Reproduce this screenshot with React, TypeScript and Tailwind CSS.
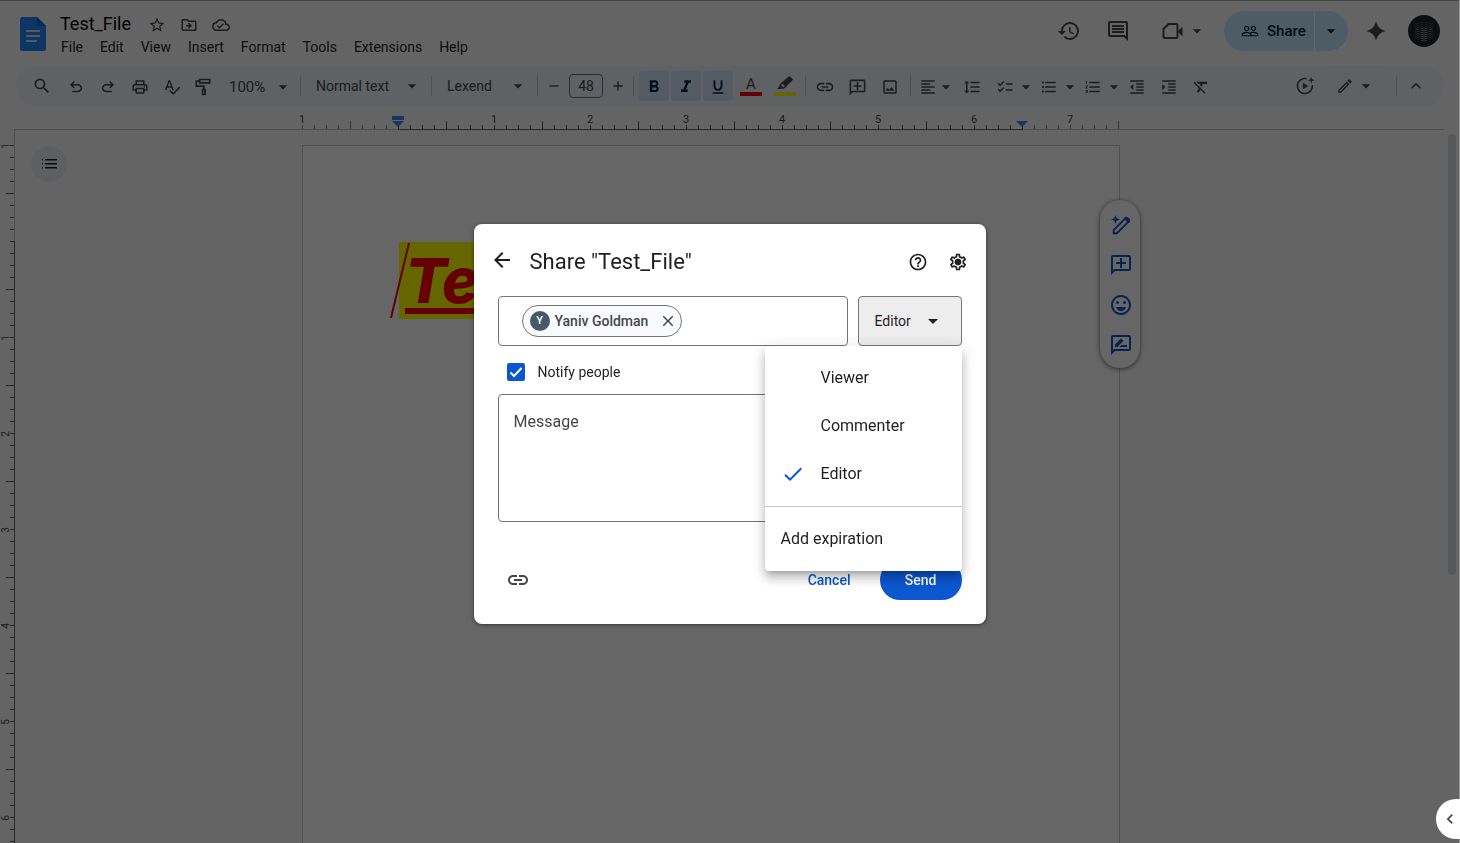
import React from "react";
import {
  MdHistory,
  MdOutlineComment,
  MdStarBorder,
  MdOutlineDriveFileMove,
  MdOutlineCloudDone,
  MdSearch,
  MdOutlinePrint,
  MdSpellcheck,
  MdArrowDropDown,
  MdRemove,
  MdAdd,
  MdFormatBold,
  MdFormatItalic,
  MdFormatUnderlined,
  MdLink,
  MdOutlineAddComment,
  MdOutlineImage,
  MdFormatAlignLeft,
  MdFormatLineSpacing,
  MdChecklist,
  MdFormatListBulleted,
  MdFormatListNumbered,
  MdFormatIndentDecrease,
  MdFormatIndentIncrease,
  MdFormatClear,
  MdOutlineEdit,
  MdKeyboardArrowUp,
  MdKeyboardArrowLeft,
  MdPeopleOutline,
  MdArrowBack,
  MdHelpOutline,
  MdOutlineSettings,
  MdClose,
  MdCheck,
  MdOutlineEmojiEmotions,
} from "react-icons/md";

type Kids = { children?: React.ReactNode };

function Symbol({ d, size = 18 }: { d: string; size?: number }) {
  return (
    <svg width={size} height={size} viewBox="0 -960 960 960" fill="currentColor" aria-hidden="true">
      <path d={d} />
    </svg>
  );
}

const UNDO =
  "M280-200v-80h284q63 0 109.500-40T720-420q0-60-46.500-100T564-560H312l104 104-56 56-200-200 200-200 56 56-104 104h252q97 0 169 63t72 157q0 94-72 157t-169 63H280Z";
const REDO =
  "M396-200q-97 0-169-63t-72-157q0-94 72-157t169-63h252L544-744l56-56 200 200-200 200-56-56 104-104H396q-63 0-109.500 40T240-420q0 60 46.500 100T396-280h284v80H396Z";

function PaintRoller() {
  return (
    <svg width="20" height="20" viewBox="0 0 24 24" fill="none" stroke="currentColor" strokeWidth="2" aria-hidden="true">
      <path d="M8 3h12v4H8zM8 5H4v6h9v4" />
      <path d="M11.500 15h3v6h-3z" />
    </svg>
  );
}

function Highlighter() {
  return (
    <svg width="16" height="14" viewBox="0 0 16 14" aria-hidden="true">
      <path d="M10.500 1.500 12.500 0 16 3.500 14.500 5.500 9.500 10 5.500 6z" fill="currentColor" />
      <path d="M5.500 6.500l3.500 3.500-2.500 2-3.500-2.500z" fill="none" stroke="currentColor" strokeWidth="1.500" />
      <path d="M0 13l2.500-3 3 2.500-.5.500z" fill="currentColor" />
    </svg>
  );
}

function VideoCam() {
  return (
    <svg width="24" height="24" viewBox="0 0 24 24" fill="none" aria-hidden="true">
      <path d="M7.500 5H15a1.500 1.500 0 0 1 1.500 1.500v11A1.500 1.500 0 0 1 15 19H4a1.500 1.500 0 0 1-1.500-1.500V10z" stroke="currentColor" strokeWidth="2" />
      <path d="M16.500 12.500l5-5v10z" fill="currentColor" />
    </svg>
  );
}

function Motion() {
  return (
    <svg width="20" height="20" viewBox="0 0 24 24" fill="none" aria-hidden="true">
      <path d="M14 3.300A9 9 0 1 0 20.800 11" stroke="currentColor" strokeWidth="2" />
      <path d="M9.500 8v8l6.500-4z" fill="currentColor" />
      <path d="M19.500 1l1 3 3 1-3 1-1 3-1-3-3-1 3-1z" fill="currentColor" />
    </svg>
  );
}

function Spark() {
  return (
    <svg width="20" height="20" viewBox="0 0 20 20" fill="currentColor" aria-hidden="true">
      <path d="M10 0c1 5.500 4.500 9 10 10-5.500 1-9 4.500-10 10-1-5.500-4.500-9-10-10 5.500-1 9-4.500 10-10z" />
    </svg>
  );
}

function DocsLogo() {
  return (
    <svg width="26" height="34" viewBox="0 0 26 34" aria-hidden="true">
      <path d="M2.500 0H17l9 9v22.500a2.500 2.500 0 0 1-2.500 2.500h-21A2.500 2.500 0 0 1 0 31.500v-29A2.500 2.500 0 0 1 2.500 0z" fill="#2684fc" />
      <path d="M17 0l9 9h-9z" fill="#0066da" />
      <path d="M6 14h14M6 19h14M6 24h11" stroke="#fff" strokeWidth="1.600" />
    </svg>
  );
}

function Avatar() {
  const dots: React.ReactNode[] = [];
  for (let row = 0; row < 11; row++) {
    for (let col = 0; col < 9; col++) {
      const off = Math.abs(col - 4);
      const x = 8 + col * 2;
      const y = 5 + row * 2 + (row < 4 ? off * 0.5 : -off * 0.5 + 1);
      const inside = y < 27 - off * 1.2 && y > 6 + off * 0.7 && !(row === 4 && off > 1);
      const bright = row >= 4 && off < 2;
      if (inside) dots.push(<circle key={row + "-" + col} cx={x} cy={y} r={0.6} fill={bright ? "#ffffff" : row < 4 ? "#6b6b6b" : "#a0a0a0"} />);
    }
  }
  return (
    <svg width="32" height="32" viewBox="0 0 32 32" role="img" aria-label="Account">
      <circle cx="16" cy="16" r="16" fill="#202226" />
      {dots}
    </svg>
  );
}

function Gear() {
  return (
    <svg width="20" height="20" viewBox="0 0 24 24" fill="currentColor" aria-hidden="true">
      <g stroke="currentColor" strokeWidth="0.500">
        <MdOutlineSettings size={24} />
      </g>
      <circle cx="12" cy="12" r="3.800" />
    </svg>
  );
}

function MagicPen() {
  return (
    <svg width="22" height="22" viewBox="0 0 24 24" fill="none" aria-hidden="true">
      <path d="M4 21v-3.500L17 4.500a1.400 1.400 0 0 1 2 0L20.500 6a1.400 1.400 0 0 1 0 2L7.500 21z" stroke="currentColor" strokeWidth="2" />
      <path d="M15 5l2-2 5 5-2 2z" fill="currentColor" />
      <path d="M6 1l1.300 3.700L11 6 7.300 7.300 6 11 4.700 7.300 1 6l3.700-1.300z" fill="currentColor" />
    </svg>
  );
}

function AddNote({ size = 22 }: { size?: number }) {
  return <MdOutlineAddComment size={size} className="-scale-x-100" />;
}

function SuggestEdit() {
  return (
    <svg width="24" height="24" viewBox="0 0 24 24" aria-hidden="true">
      <path
        d="M20 2H4c-1.100 0-2 .9-2 2v18l4-4h14c1.100 0 2-.9 2-2V4c0-1.100-.9-2-2-2zm0 14H5.200L4 17.200V4h16v12z"
        fill="currentColor"
      />
      <path d="M6 14v-2.500l5.900-5.900 2.500 2.500L8.500 14zM18 14h-7.500l2-2H18z" fill="currentColor" />
    </svg>
  );
}

function IconButton({ label, className = "w-8", children }: Kids & { label: string; className?: string }) {
  return (
    <button type="button" aria-label={label} className={"flex h-8 shrink-0 items-center justify-center " + className}>
      {children}
    </button>
  );
}

function Divider({ className = "" }: { className?: string }) {
  return <div className={"h-5 w-px shrink-0 bg-[#c7c7c7] " + className} />;
}

function Caret() {
  return (
    <span className="flex w-4 items-center justify-center">
      <MdArrowDropDown size={20} className="shrink-0" />
    </span>
  );
}

function HorizontalRuler() {
  const ticks = Array.from({ length: 69 }, (_, i) => i);
  const labels = ["1", "", "1", "2", "3", "4", "5", "6", "7"];
  return (
    <svg width="836" height="24" viewBox="0 0 836 24" className="shrink-0" role="img" aria-label="Horizontal ruler">
      {ticks.map((i) => (
        <rect key={i} x={10 + i * 12} y={i % 8 === 4 ? 15 : 19} width="1" height={i % 8 === 4 ? 8 : 4} fill={i < 8 || i > 60 ? "#80868b" : "#5f6368"} />
      ))}
      <rect x="106" y="23" width="625" height="1" fill="#5f6368" />
      {labels.map((t, i) => (
        <text key={i} x={10 + i * 96} y="17" textAnchor="middle" className="font-[Roboto,sans-serif] text-[11px]" fill="#444746">
          {t}
        </text>
      ))}
      <path d="M100 10h12v4h-12zM100 15h12l-6 6zM724 15h12l-6 6z" fill="#4285f4" />
    </svg>
  );
}

function VerticalRuler() {
  const ticks = Array.from({ length: 120 }, (_, i) => i);
  const labels = ["1", "", "1", "2", "3", "4", "5", "6"];
  return (
    <svg width="15" height="100%" className="block" role="img" aria-label="Vertical ruler">
      {ticks.map((i) => (
        <rect key={i} x={i % 8 === 4 ? 6 : 10} y={15 + i * 12} width={i % 8 === 4 ? 8 : 4} height="1" fill="#5f6368" />
      ))}
      <rect x="14" y="0" width="1" height="111" fill="#c4c7c5" />
      <rect x="14" y="111" width="1" height="2000" fill="#5f6368" />
      {labels.map((t, i) => (
        <text key={i} transform={`translate(9 ${16 + i * 96}) rotate(-90)`} textAnchor="middle" className="font-[Roboto,sans-serif] text-[10px]" fill="#444746">
          {t}
        </text>
      ))}
    </svg>
  );
}

function Header() {
  const menus = ["File", "Edit", "View", "Insert", "Format", "Tools", "Extensions", "Help"];
  return (
    <header className="flex h-[65px] shrink-0 justify-between pr-5 pl-5">
      <div className="flex">
        <a href="#home" aria-label="Docs home" className="mt-4">
          <DocsLogo />
        </a>
        <div className="ml-[14px] pt-2">
          <div className="flex h-7 items-center text-[#444746]">
            <h1 className="pt-px text-lg leading-7 text-black">Test_File</h1>
            <div className="ml-[10px] flex pt-1">
              <IconButton label="Star"><MdStarBorder size={18} /></IconButton>
              <IconButton label="Move"><MdOutlineDriveFileMove size={18} /></IconButton>
              <IconButton label="Saved to Drive"><MdOutlineCloudDone size={18} /></IconButton>
            </div>
          </div>
          <nav className="ml-px flex gap-[17px] text-sm leading-5 text-[#1f1f1f]">
            {menus.map((m) => (
              <button type="button" key={m}>{m}</button>
            ))}
          </nav>
        </div>
      </div>
      <div className="flex h-[60px] items-center text-[#444746]">
        <IconButton label="Version history" className="w-12"><MdHistory size={24} /></IconButton>
        <IconButton label="Comments" className="w-[50px]"><MdOutlineComment size={24} /></IconButton>
        <button type="button" aria-label="Video call" className="ml-[18px] flex items-center gap-1"><VideoCam /><Caret /></button>
        <div className="ml-[19px] flex h-10 text-[#001d35]">
          <button type="button" className="flex w-[90px] items-center gap-2 rounded-l-full bg-[#c2e7ff] pl-[17px] text-[15px] font-medium">
            <MdPeopleOutline size={18} />
            Share
          </button>
          <button type="button" aria-label="Share options" className="ml-px flex w-[33px] items-center justify-center rounded-r-full bg-[#c2e7ff] pr-[2px]">
            <Caret />
          </button>
        </div>
        <IconButton label="Gemini" className="ml-3 w-8"><Spark /></IconButton>
        <button type="button" className="ml-4"><Avatar /></button>
      </div>
    </header>
  );
}

function Toolbar() {
  return (
    <div className="mr-4 ml-4 flex h-10 shrink-0 items-center rounded-full bg-[#edf2fa] pl-[10px] text-[15px] text-[#444746]">
      <IconButton label="Search menus" className="mr-[2px] w-8"><MdSearch size={20} /></IconButton>
      <div className="flex pt-[2px]">
        <IconButton label="Undo"><Symbol d={UNDO} /></IconButton>
        <IconButton label="Redo"><Symbol d={REDO} /></IconButton>
        <IconButton label="Print"><MdOutlinePrint size={18} /></IconButton>
        <IconButton label="Spelling check"><MdSpellcheck size={18} /></IconButton>
        <IconButton label="Paint format" className="w-[30px]"><PaintRoller /></IconButton>
      </div>
      <button type="button" className="flex w-[82px] items-center justify-between pt-[2px] pr-[9px] pl-[11px]">100%<Caret /></button>
      <Divider />
      <button type="button" className="flex w-[130px] items-center justify-between pr-[11px] pl-[15px] text-sm">Normal text<Caret /></button>
      <Divider />
      <button type="button" className="flex w-[105px] items-center justify-between pr-[11px] pl-[15px] text-sm">Lexend<Caret /></button>
      <Divider />
      <IconButton label="Decrease font size" className="w-[31px]"><MdRemove size={16} /></IconButton>
      <input aria-label="Font size" defaultValue="48" className="h-6 w-[34px] rounded border border-[#747775] bg-transparent text-center text-sm" />
      <IconButton label="Increase font size" className="w-[30px]"><MdAdd size={16} /></IconButton>
      <Divider />
      <div className="ml-[5px] flex gap-[2px] text-[#041e49]">
        <button type="button" aria-label="Bold" aria-pressed="true" className="flex size-[30px] items-center justify-center rounded bg-[#d3e3fd] pt-[2px]"><MdFormatBold size={20} /></button>
        <button type="button" aria-label="Italic" aria-pressed="true" className="flex size-[30px] items-center justify-center rounded bg-[#d3e3fd] pt-[2px]"><MdFormatItalic size={20} /></button>
        <button type="button" aria-label="Underline" aria-pressed="true" className="flex size-[30px] items-center justify-center rounded bg-[#d3e3fd] pt-px"><MdFormatUnderlined size={18} /></button>
      </div>
      <button type="button" aria-label="Text color" className="ml-px flex w-[34px] flex-col items-center leading-4">
        <span aria-hidden="true">A</span>
        <span className="h-1 w-[22px] bg-[#ff0000]" />
      </button>
      <button type="button" aria-label="Highlight color" className="flex w-[34px] flex-col items-center">
        <span className="h-4"><Highlighter /></span>
        <span className="h-1 w-[22px] bg-[#ffff00]" />
      </button>
      <Divider className="mr-[3px] ml-[3px]" />
      <div className="flex pt-[2px]">
        <IconButton label="Insert link"><MdLink size={20} /></IconButton>
        <IconButton label="Add comment"><AddNote size={19} /></IconButton>
        <IconButton label="Insert image" className="w-[34px]"><MdOutlineImage size={18} /></IconButton>
      </div>
      <Divider className="ml-[3px]" />
      <div className="flex pt-[2px]">
        <button type="button" aria-label="Align" className="flex w-[45px] items-center gap-px pl-2"><MdFormatAlignLeft size={18} /><Caret /></button>
        <IconButton label="Line spacing"><MdFormatLineSpacing size={18} /></IconButton>
      </div>
      <div className="ml-[5px] flex pt-[2px]">
        <button type="button" aria-label="Checklist" className="flex w-11 items-center gap-1 pl-[3px]"><MdChecklist size={18} /><Caret /></button>
        <button type="button" aria-label="Bulleted list" className="flex w-11 items-center gap-1 pl-[3px]"><MdFormatListBulleted size={18} /><Caret /></button>
        <button type="button" aria-label="Numbered list" className="flex w-11 items-center gap-1 pl-[3px]"><MdFormatListNumbered size={18} /><Caret /></button>
      </div>
      <div className="flex gap-2 pt-[2px]">
        <IconButton label="Decrease indent" className="w-6"><MdFormatIndentDecrease size={18} /></IconButton>
        <IconButton label="Increase indent" className="w-6"><MdFormatIndentIncrease size={18} /></IconButton>
        <IconButton label="Clear formatting" className="w-6"><MdFormatClear size={18} /></IconButton>
      </div>
      <div className="ml-auto flex items-center pr-3">
        <IconButton label="Record motion"><Motion /></IconButton>
        <button type="button" aria-label="Editing mode" className="ml-[2px] flex h-[30px] w-16 items-center justify-center gap-1 rounded-full bg-[#edeff8]"><MdOutlineEdit size={18} /><Caret /></button>
        <Divider className="mr-[3px] ml-[9px]" />
        <IconButton label="Hide menus"><MdKeyboardArrowUp size={20} /></IconButton>
      </div>
    </div>
  );
}

function Canvas() {
  return (
    <div className="relative flex min-h-0 flex-1 overflow-hidden">
      <div className="absolute inset-y-0 left-0">
        <VerticalRuler />
      </div>
      <button type="button" aria-label="Show outline" className="absolute top-4 left-[31px] flex size-9 items-center justify-center rounded-full bg-[#e9eef6] text-[#1f1f1f]">
        <svg width="16" height="10" viewBox="0 0 16 10" fill="currentColor" aria-hidden="true">
          <path d="M1 0h1v1H1zM4 0h12v1H4zM1 4h1v1H1zM4 4h12v1H4zM1 8h1v1H1zM4 8h12v1H4z" />
          <path d="M1 1h1v1H1zM4 1h12v1H4zM1 5h1v1H1zM4 5h12v1H4zM1 9h1v1H1zM4 9h12v1H4z" opacity="0.500" />
        </svg>
      </button>
      <main className="flex flex-1 justify-center pt-[15px] pr-[38px]">
        <div className="relative h-[1056px] w-[818px] shrink-0 border border-[#c7c7c7] bg-white p-24 font-[Inter,sans-serif]">
          <p className="text-[62px] leading-[77px] font-extrabold text-[#ff0000] italic">
            <span className="inline-block h-[77px] bg-[#ffff00] pl-[6px] underline decoration-[6px] underline-offset-[5px] [text-decoration-skip-ink:none]">Test</span>
          </p>
          <svg width="20" height="77" viewBox="0 0 20 77" className="absolute top-24 left-[87px]" aria-hidden="true">
            <path d="M19 1L1 76" stroke="#ff0000" strokeWidth="2" />
          </svg>
          <div className="absolute top-[54px] -right-[21px] flex h-[168px] w-10 flex-col items-center rounded-full bg-white pt-[5px] pb-[3px] pl-[2px] text-[#0b57d0] shadow-[0_1px_5px_rgba(0,0,0,0.6)]">
            <IconButton label="Help me write" className="h-10 w-10 grow"><MagicPen /></IconButton>
            <IconButton label="Add comment" className="h-10 w-10 grow"><AddNote size={24} /></IconButton>
            <IconButton label="Add emoji reaction" className="h-10 w-10 grow"><MdOutlineEmojiEmotions size={24} /></IconButton>
            <IconButton label="Suggest edits" className="h-10 w-10 grow"><SuggestEdit /></IconButton>
          </div>
        </div>
      </main>
      <div className="absolute top-1 right-1 h-[441px] w-2 rounded-full bg-[#dadce0]" />
    </div>
  );
}

function RoleMenu() {
  return (
    <div role="menu" className="absolute top-full right-0 z-10 w-[197px] rounded bg-white text-base text-[#1f1f1f] shadow-[0_5px_5px_-3px_rgba(0,0,0,0.2),0_8px_10px_1px_rgba(0,0,0,0.14),0_3px_14px_2px_rgba(0,0,0,0.12)]">
      <div className="border-b border-[#c4c7c5] py-2">
        {["Viewer", "Commenter", "Editor"].map((role) => (
          <button type="button" role="menuitemradio" aria-checked={role === "Editor"} key={role} className="flex h-12 w-full items-center pl-4">
            <span className="flex w-10 text-[#0b57d0]">{role === "Editor" && <MdCheck size={24} />}</span>
            {role}
          </button>
        ))}
      </div>
      <div className="py-2">
        <button type="button" role="menuitem" className="flex h-12 w-full items-center pl-4">Add expiration</button>
      </div>
    </div>
  );
}

function ShareDialog() {
  return (
    <div role="dialog" aria-labelledby="share-title" className="w-full max-w-[512px] rounded-lg bg-white px-6 pb-6 text-[#1f1f1f] shadow-[0_1px_4px_rgba(0,0,0,0.5)]">
      <div className="-mr-3 -ml-2 flex h-[72px] items-center">
        <IconButton label="Back" className="w-6"><MdArrowBack size={24} /></IconButton>
        <h2 id="share-title" className="ml-4 grow pt-1 text-[22px] leading-7">Share "Test_File"</h2>
        <div className="flex gap-2 pt-1">
          <IconButton label="Help"><MdHelpOutline size={20} /></IconButton>
          <IconButton label="Settings"><Gear /></IconButton>
        </div>
      </div>
      <div className="flex gap-[10px]">
        <div className="flex h-[50px] grow items-center rounded border border-[#747775] pl-[23px]">
          <span className="flex h-8 w-40 items-center rounded-full border border-[#747775] bg-[#f8fafd] pl-[7px] text-sm font-medium text-[#444746]">
            <span className="mr-[5px] flex size-5 items-center justify-center rounded-full bg-[#455a64] text-[11px] text-white">Y</span>
            <span className="grow">Yaniv Goldman</span>
            <button type="button" aria-label="Remove Yaniv Goldman" className="mr-1"><MdClose size={18} /></button>
          </span>
          <input aria-label="Add people" className="w-24 grow bg-transparent outline-none" />
        </div>
        <div className="relative">
          <button type="button" aria-haspopup="menu" aria-expanded="true" className="flex h-[50px] w-[104px] items-center gap-[10px] rounded border border-[#747775] bg-[#ededed] pl-4 text-sm">
            Editor
            <MdArrowDropDown size={24} />
          </button>
          <RoleMenu />
        </div>
      </div>
      <label className="flex h-12 items-center pt-1 pl-[9px] text-sm">
        <span className="relative mr-[13px] flex size-[18px]">
          <input type="checkbox" defaultChecked className="peer size-[18px] appearance-none rounded-[2px] border-2 border-[#444746] checked:border-[#0b57d0] checked:bg-[#0b57d0]" />
          <svg viewBox="0 0 18 18" className="pointer-events-none absolute inset-0 hidden peer-checked:block" fill="none" stroke="#fff" strokeWidth="2" aria-hidden="true">
            <path d="M3.500 9.500l3.500 3.500 7.500-8" />
          </svg>
        </span>
        Notify people
      </label>
      <textarea aria-label="Message" placeholder="Message" className="block h-32 w-full resize-none rounded border border-[#747775] px-[15px] py-[15px] text-base leading-6 placeholder:text-[#444746]" />
      <div className="mt-[38px] flex h-10 items-center text-sm font-medium">
        <IconButton label="Copy link" className="w-10 text-[#444746]"><MdLink size={24} /></IconButton>
        <button type="button" className="mr-[17px] ml-auto h-10 px-3 text-[#0b57d0]">Cancel</button>
        <button type="button" className="h-10 w-[82px] rounded-full bg-[#0b57d0] text-white">Send</button>
      </div>
    </div>
  );
}

export default function App() {
  return (
    <div className="relative flex h-screen flex-col overflow-hidden border-t border-t-[#a8a8a8] bg-[#f9fbfd] font-[Roboto,sans-serif]">
      <Header />
      <Toolbar />
      <div className="mr-4 ml-[14px] flex h-6 shrink-0 justify-center border-b border-[#c4c7c5] pr-[38px]">
        <HorizontalRuler />
      </div>
      <Canvas />
      <div className="fixed inset-0 flex items-center justify-center border-r border-[#999] bg-black/60 pt-[5px]">
        <ShareDialog />
      </div>
      <button type="button" aria-label="Show side panel" className="fixed right-0 bottom-1 flex h-10 w-6 items-center justify-center rounded-l-full bg-white pl-1 text-[#444746]">
        <MdKeyboardArrowLeft size={20} />
      </button>
    </div>
  );
}
